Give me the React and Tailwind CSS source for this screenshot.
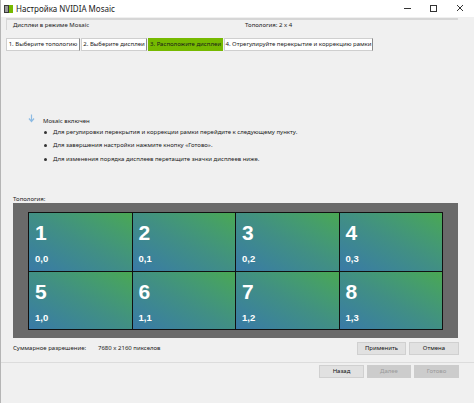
import React from 'react'

const cells = [
  ['1', '0,0'], ['2', '0,1'], ['3', '0,2'], ['4', '0,3'],
  ['5', '1,0'], ['6', '1,1'], ['7', '1,2'], ['8', '1,3'],
]

const tabs = [
  { label: '1. Выберите топологию', w: 'w-[74px]' },
  { label: '2. Выберите дисплеи', w: 'w-[66px]' },
  { label: '3. Расположите дисплеи', w: 'w-[75px]', active: true },
  { label: '4. Отрегулируйте перекрытие и коррекцию рамки', w: 'w-[149px]' },
]

const hints = [
  'Для регулировки перекрытия и коррекции рамки перейдите к следующему пункту.',
  'Для завершения настройки нажмите кнопку «Готово».',
  'Для изменения порядка дисплеев перетащите значки дисплеев ниже.',
]

function Btn({ children, w, disabled }) {
  return (
    <div
      className={`${w} h-[13px] flex items-center justify-center border text-[6px] ${
        disabled
          ? 'bg-[#cccccc] border-[#cccccc] text-[#9a9a9a]'
          : 'bg-[#e1e1e1] border-[#d0d0d0] text-[#111]'
      }`}
    >
      {children}
    </div>
  )
}

export default function App() {
  return (
    <div
      className="w-[474px] h-[403px] bg-[#f0f0f0] overflow-hidden text-[#1a1a1a] border-l border-[#b5b5b5]"
      style={{ fontFamily: '"Noto Sans", "Open Sans", sans-serif' }}
    >
      {/* title bar */}
      <div className="h-[17px] bg-white flex items-center">
        <svg width="9" height="8" viewBox="0 0 9 8" className="ml-[3px]">
          <rect x="0" y="0" width="5" height="8" fill="#3a3a3a" />
          <rect x="5" y="0" width="4" height="8" fill="#76b900" />
          <rect x="1" y="1" width="3" height="6" fill="#9a9a9a" />
        </svg>
        <span className="ml-[3px] text-[8px] leading-none">Настройка NVIDIA Mosaic</span>
        <div className="ml-auto flex items-center h-full">
          <svg width="26" height="17" viewBox="0 0 26 17">
            <line x1="9" y1="8.5" x2="16" y2="8.5" stroke="#333" strokeWidth="1" />
          </svg>
          <svg width="26" height="17" viewBox="0 0 26 17">
            <rect x="9.5" y="5.5" width="6" height="6" fill="none" stroke="#333" strokeWidth="1" />
          </svg>
          <svg width="26" height="17" viewBox="0 0 26 17" className="mr-[1px]">
            <path d="M10 5 L16 11 M16 5 L10 11" stroke="#333" strokeWidth="1" />
          </svg>
        </div>
      </div>

      {/* group box */}
      <div className="ml-[5px] mt-[1px] w-[452px] h-[12px] border-t-2 border-l border-[#d6d6d6] flex items-center text-[6px]">
        <span className="ml-[6px] w-[232px]">Дисплеи в режиме Mosaic</span>
        <span>Топология: 2 x 4</span>
      </div>

      {/* tabs */}
      <div className="ml-[5px] mt-[8px] flex gap-[1px]">
        {tabs.map((t) => (
          <div
            key={t.label}
            className={`${t.w} h-[13px] flex items-center justify-center text-[6px] whitespace-nowrap border ${
              t.active
                ? 'bg-[#76b900] border-[#76b900] text-[#1a1a1a]'
                : 'bg-white border-[#cfcfcf] border-r-[#8a8a8a]'
            }`}
          >
            {t.label}
          </div>
        ))}
      </div>

      {/* info */}
      <div className="mt-[65px] ml-[27px]">
        <div className="flex items-center h-[10px]">
          <svg width="7" height="9" viewBox="0 0 7 9" className="-mt-[5px]">
            <path d="M3.5 0.5 V7 M1 4.5 L3.5 7.5 L6 4.5" stroke="#8dbbe3" strokeWidth="1.2" fill="none" />
          </svg>
          <span className="ml-[8px] text-[6px]">Mosaic включен</span>
        </div>
        <ul className="mt-[1px] ml-[16px] flex flex-col gap-[3.5px]">
          {hints.map((h) => (
            <li key={h} className="flex items-center h-[10px] text-[6px] whitespace-nowrap">
              <span className="w-[3px] h-[3px] rounded-full bg-[#333] mr-[6px]" />
              {h}
            </li>
          ))}
        </ul>
      </div>

      {/* topology */}
      <div className="mt-[31px] ml-[12px] text-[6px] h-[8px] leading-[8px] text-[#1a1a1a]">Топология:</div>
      <div className="ml-[12px] w-[445px] h-[135px] bg-[#6a6a6a] pt-[9px] pl-[15px]">
        <div className="w-[415px] h-[118px] grid grid-cols-4 grid-rows-2 border border-[#111] bg-[#111] gap-[1px]">
          {cells.map(([n, pos]) => (
            <div
              key={n}
              className="bg-gradient-to-tr from-[#3a7aa6] via-[#418f84] to-[#4aa852] text-white font-bold flex flex-col pl-[6px] pt-[10px]"
              style={{ fontFamily: '"Liberation Sans", Arial, sans-serif' }}
            >
              <span className="text-[21px] leading-[20px]">{n}</span>
              <span className="mt-[11px] text-[9.5px] leading-none">{pos}</span>
            </div>
          ))}
        </div>
      </div>

      {/* resolution + apply */}
      <div className="ml-[12px] mt-[4px] w-[446px] flex items-center text-[6px]">
        <span className="w-[85px]">Суммарное разрешение:</span>
        <span>7680 x 2160 пикселов</span>
        <div className="ml-auto flex gap-[3px]">
          <Btn w="w-[49px]">Применить</Btn>
          <Btn w="w-[50px]">Отмена</Btn>
        </div>
      </div>

      <div className="mt-[7px] h-[2px] border-t border-[#dcdcdc] border-b-white" />

      <div className="mt-[1px] w-[458px] flex justify-end gap-[3px]">
        <Btn w="w-[45px]">Назад</Btn>
        <Btn w="w-[44px]" disabled>Далее</Btn>
        <Btn w="w-[45px]" disabled>Готово</Btn>
      </div>
    </div>
  )
}
